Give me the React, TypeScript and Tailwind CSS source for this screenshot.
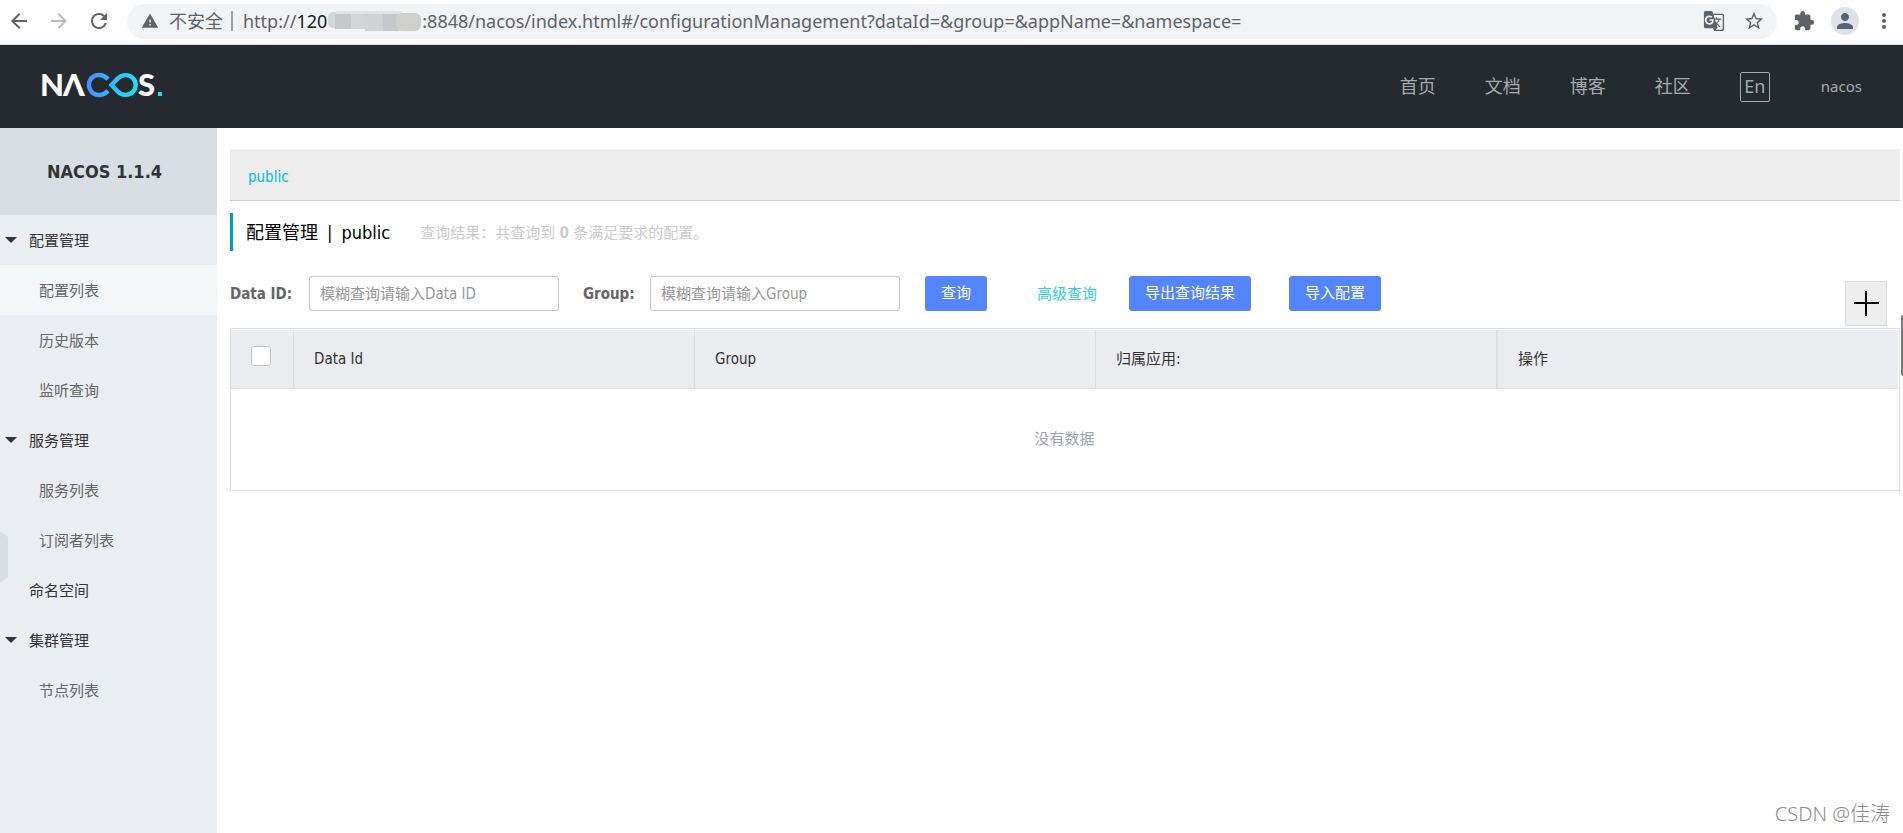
import { useState } from "react";
import {
  MdArrowBack,
  MdArrowForward,
  MdExtension,
  MdGTranslate,
  MdMoreVert,
  MdPerson,
  MdRefresh,
  MdStarBorder,
  MdWarning,
} from "react-icons/md";

type MenuGroup = {
  title: string;
  children?: string[];
};

const menu: MenuGroup[] = [
  { title: "配置管理", children: ["配置列表", "历史版本", "监听查询"] },
  { title: "服务管理", children: ["服务列表", "订阅者列表"] },
  { title: "命名空间" },
  { title: "集群管理", children: ["节点列表"] },
];

const navLinks = ["首页", "文档", "博客", "社区"];

const primaryButton =
  "h-[35px] rounded-[3px] bg-[#5584ff] px-4 text-[15px] text-white";
const textInput =
  "h-[35px] w-[250px] rounded-[3px] border border-[#c4c6cf] px-[10px] text-[15px] text-[#333] outline-none placeholder:text-[#999]";

const BrowserBar = () => (
  <div className="flex h-[45px] items-center border-b border-[#dcdee1] bg-white pb-[2px] pr-[7px] pl-[7px] font-['Noto_Sans','Noto_Sans_CJK_SC',sans-serif] text-[#5f6368]">
    <div className="flex gap-4">
      <button aria-label="Back">
        <MdArrowBack size={24} />
      </button>
      <button aria-label="Forward" className="text-[#babcbe]">
        <MdArrowForward size={24} />
      </button>
      <button aria-label="Reload">
        <MdRefresh size={24} />
      </button>
    </div>
    <div className="ml-4 flex h-[35px] flex-1 items-center rounded-full bg-[#f1f3f4] pr-3 pl-[14px] text-[18px]">
      <MdWarning size={18} />
      <span className="ml-[10px]">不安全</span>
      <span className="mx-2 h-5 w-[2px] bg-[#9aa0a6]" />
      <span className="ml-[2px]">http://</span>
      <span className="text-[#202124]">120</span>
      {/* masked part of the address */}
      <svg width="93" height="22" viewBox="0 0 93 22" className="mx-px">
        <rect x="0" y="2" width="24" height="16" rx="5" fill="#d3d8d9" />
        <rect x="8" y="1" width="66" height="17" fill="#e0e2e3" />
        <rect x="7" y="4" width="16" height="15" fill="#c6c8c9" />
        <rect x="23" y="4" width="14" height="15" fill="#d3d5d6" />
        <rect x="37" y="4" width="18" height="17" fill="#d0d2d3" />
        <rect x="55" y="4" width="16" height="17" fill="#c6c7c8" />
        <rect x="68" y="3" width="25" height="18" rx="6" fill="#cfcfcd" />
      </svg>
      <span>
        :8848/nacos/index.html#/configurationManagement?dataId=&amp;group=&amp;appName=&amp;namespace=
      </span>
      <div className="ml-auto flex items-center gap-[18px]">
        <button aria-label="Translate">
          <MdGTranslate size={22} />
        </button>
        <button aria-label="Bookmark">
          <MdStarBorder size={22} />
        </button>
      </div>
    </div>
    <button aria-label="Extensions" className="ml-4">
      <MdExtension size={22} />
    </button>
    <button
      aria-label="Profile"
      className="ml-4 flex size-7 items-center justify-center rounded-full bg-[#dee1e6] text-[#55617a]"
    >
      <MdPerson size={24} />
    </button>
    <button aria-label="Menu" className="ml-[13px]">
      <MdMoreVert size={24} />
    </button>
  </div>
);

const Logo = () => (
  <svg width="130" height="44" viewBox="-4 -9 130 44" role="img" aria-label="Nacos">
    <defs>
      <linearGradient id="loop" x1="45" y1="0" x2="95" y2="0" gradientUnits="userSpaceOnUse">
        <stop offset="0" stopColor="#4a8cff" />
        <stop offset="1" stopColor="#16e6f5" />
      </linearGradient>
    </defs>
    <g
      fill="#fff"
      fontFamily="Lato, 'Noto Sans', sans-serif"
      fontWeight="900"
      fontSize="31"
    >
      <text x="-2" y="24">N</text>
      <text x="21" y="24">Λ</text>
      <text x="96" y="24">S</text>
    </g>
    <g fill="none" stroke="url(#loop)" strokeWidth="4.4">
      <path d="M66 7.2 C61 1.6 54.500 2.600 51.300 4.600 C45.500 8.600 45.500 17 51.300 21.400 C54.500 23.400 61 24.400 66 18.800" />
      <path d="M69.500 13 L75.800 6.400 C80 2.200 87 2 91 6.200 C94.600 10 94.600 16 91 19.800 C87 24 80 23.800 75.800 19.600 Z" />
    </g>
    <rect x="116" y="20" width="4" height="4" fill="#16e0f5" />
  </svg>
);

const TopNav = () => (
  <header className="flex h-[83px] items-center bg-[#252a2f] pr-[41px] pl-[38px] font-['Noto_Sans','Noto_Sans_CJK_SC',sans-serif] text-[#a8aaac]">
    <a href="#/" className="pb-1">
      <Logo />
    </a>
    <nav className="ml-auto flex items-center gap-[49px] text-[18px]">
      {navLinks.map((label) => (
        <a key={label} href="#/">
          {label}
        </a>
      ))}
      <button className="flex h-[30px] w-[30px] items-center justify-center rounded-[2px] border border-[#a8aaac]">
        En
      </button>
      <a href="#/" className="ml-[2px] text-[15px]">
        nacos
      </a>
    </nav>
  </header>
);

const Sidebar = () => {
  const [closed, setClosed] = useState<string[]>([]);
  const [active, setActive] = useState("配置列表");

  const toggle = (title: string) =>
    setClosed((prev) =>
      prev.includes(title) ? prev.filter((t) => t !== title) : [...prev, title]
    );

  return (
    <aside className="relative w-[217px] shrink-0 bg-[#eaedf1]">
      <h1 className="h-[87px] bg-[#d9dee4] pr-2 text-center text-[18px] leading-[87px] font-bold text-[#333]">
        NACOS 1.1.4
      </h1>
      <ul>
        {menu.map((group) => (
          <li key={group.title}>
            <button
              className="flex h-[50px] w-full items-center pl-[5px] leading-[50px] text-[#333]"
              onClick={() => toggle(group.title)}
            >
              <span className="w-[24px]">
                {group.children && (
                  <svg width="12" height="6" viewBox="0 0 12 6" fill="#333">
                    <path d="M0 0h12L6 6z" />
                  </svg>
                )}
              </span>
              <span className="pt-[2px]">{group.title}</span>
            </button>
            {group.children && !closed.includes(group.title) && (
              <ul>
                {group.children.map((item) => (
                  <li key={item}>
                    <a
                      href="#/"
                      onClick={() => setActive(item)}
                      className={`flex h-[50px] items-center pt-[2px] pl-[39px] text-[#666] ${
                        active === item ? "bg-[#f4f6f8]" : ""
                      }`}
                    >
                      {item}
                    </a>
                  </li>
                ))}
              </ul>
            )}
          </li>
        ))}
      </ul>
      {/* Collapse handle */}
      <button aria-label="Collapse" className="absolute top-[403px] left-0">
        <svg width="8" height="52" viewBox="0 0 8 52" fill="#d9dee4">
          <path d="M0 0l8 6v40l-8 6z" />
        </svg>
      </button>
    </aside>
  );
};

const App = () => {
  const [dataId, setDataId] = useState("");
  const [group, setGroup] = useState("");

  return (
    <div className="relative flex min-h-screen flex-col overflow-hidden bg-white font-['DejaVu_Sans_Condensed','Noto_Sans_CJK_SC',sans-serif] text-[15px]">
      <BrowserBar />
      <TopNav />
      <div className="flex flex-1">
        <Sidebar />
        <main className="min-w-0 flex-1 pt-[21px] pr-[3px] pl-[13px]">
          <div className="flex h-[52px] items-center border-b border-[#ccc] bg-[#ededed] pt-[6px] pl-[18px]">
            <a href="#/" className="text-[#00c1de]">
              public
            </a>
          </div>
          <div className="mt-3 flex h-[38px] items-center border-l-[3px] border-[#09c] pl-[13px]">
            <h2 className="text-[18px] text-black">
              <span>配置管理</span>
              <span className="mx-[9px]">|</span>
              <span>public</span>
            </h2>
            <p className="ml-[30px] pt-[2px] text-[#ccc]">
              查询结果：共查询到 <strong>0</strong> 条满足要求的配置。
            </p>
          </div>

          {/* Search form */}
          <form
            className="mt-[25px] flex items-start"
            onSubmit={(e) => e.preventDefault()}
          >
            <label
              htmlFor="dataId"
              className="w-[79px] leading-[36px] font-bold text-[#666]"
            >
              Data ID:
            </label>
            <input
              id="dataId"
              className={textInput}
              placeholder="模糊查询请输入Data ID"
              value={dataId}
              onChange={(e) => setDataId(e.target.value)}
            />
            <label
              htmlFor="group"
              className="ml-6 w-[67px] leading-[36px] font-bold text-[#666]"
            >
              Group:
            </label>
            <input
              id="group"
              className={textInput}
              placeholder="模糊查询请输入Group"
              value={group}
              onChange={(e) => setGroup(e.target.value)}
            />
            <button type="submit" className={`ml-[25px] ${primaryButton}`}>
              查询
            </button>
            <a href="#/" className="ml-[50px] leading-[36px] text-[#33cde5]">
              高级查询
            </a>
            <button type="button" className={`ml-8 ${primaryButton}`}>
              导出查询结果
            </button>
            <button type="button" className={`ml-[38px] ${primaryButton}`}>
              导入配置
            </button>
            <button
              type="button"
              aria-label="新建配置"
              className="mt-[5px] mr-[13px] ml-auto flex h-[45px] w-[42px] items-center justify-center border border-[#ddd] bg-[#eee]"
            >
              <svg width="25" height="25" viewBox="0 0 25 25" fill="#000">
                <path d="M11 0h2v25h-2zM0 11h25v2H0z" />
              </svg>
            </button>
          </form>

          {/* Table */}
          <div className="mt-[2px] border border-[#dcdee3] pt-px pr-px">
            <table className="w-full table-fixed border-separate border-spacing-0 text-left text-[#333]">
              <thead className="bg-[#ebecf0]">
                <tr className="h-[59px]">
                  <th className="w-[63px] border-r border-b border-[#dcdee3] pl-5">
                    <input
                      type="checkbox"
                      aria-label="全选"
                      className="mb-[6px] block size-5 appearance-none rounded-[3px] border border-[#c4c6cf] bg-white"
                    />
                  </th>
                  <th className="border-r border-b border-[#dcdee3] px-5 font-normal">
                    Data Id
                  </th>
                  <th className="border-r border-b border-[#dcdee3] px-5 font-normal">
                    Group
                  </th>
                  <th className="border-r border-b border-[#dcdee3] px-5 font-normal">
                    归属应用:
                  </th>
                  <th className="border-b border-l border-[#dcdee3] px-5 font-normal">
                    操作
                  </th>
                </tr>
              </thead>
              <tbody>
                <tr className="h-[101px]">
                  <td colSpan={5} className="text-center text-[#a0a2ad]">
                    没有数据
                  </td>
                </tr>
              </tbody>
            </table>
          </div>
        </main>
      </div>
      <div className="absolute top-[315px] right-0 h-[61px] w-[2px] rounded-l-sm bg-[#777]" />
      <div className="absolute right-[13px] bottom-1 font-['Noto_Sans','Noto_Sans_CJK_SC',sans-serif] text-[20px] font-light text-[#8c8c8c]">
        CSDN @佳涛
      </div>
    </div>
  );
};

export default App;
